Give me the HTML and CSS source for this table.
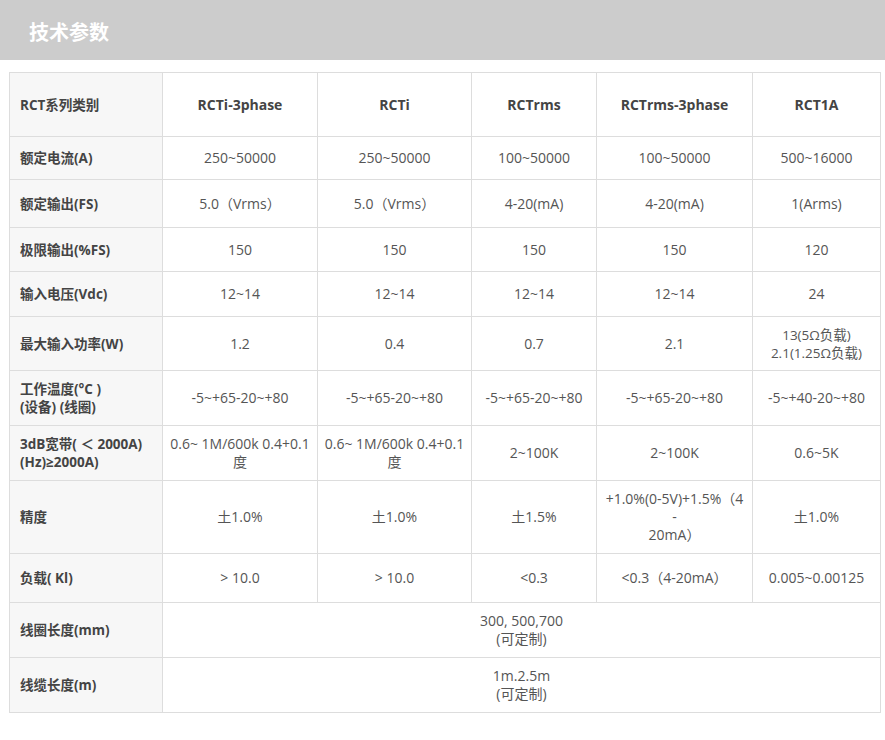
FILE: index.html
```html
<!DOCTYPE html>
<html lang="zh">
<head>
<meta charset="utf-8">
<title>技术参数</title>
<link rel="stylesheet" href="styles.css">
</head>
<body>
<header class="banner"><h1 class="banner-title">技术参数</h1></header>
<main class="wrap">
<table class="spec">
<colgroup>
<col class="c0"><col class="c1"><col class="c2"><col class="c3"><col class="c4"><col class="c5">
</colgroup>
<tbody>
<tr class="r-head"><th class="lbl">RCT系列类别</th><th>RCTi-3phase</th><th>RCTi</th><th>RCTrms</th><th>RCTrms-3phase</th><th>RCT1A</th></tr>
<tr class="r1"><th class="lbl">额定电流(A)</th><td>250~50000</td><td>250~50000</td><td>100~50000</td><td>100~50000</td><td>500~16000</td></tr>
<tr class="r2"><th class="lbl">额定输出(FS)</th><td>5.0（Vrms）</td><td>5.0（Vrms）</td><td>4-20(mA)</td><td>4-20(mA)</td><td>1(Arms)</td></tr>
<tr class="r3"><th class="lbl">极限输出(%FS)</th><td>150</td><td>150</td><td>150</td><td>150</td><td>120</td></tr>
<tr class="r4"><th class="lbl">输入电压(Vdc)</th><td>12~14</td><td>12~14</td><td>12~14</td><td>12~14</td><td>24</td></tr>
<tr class="r5"><th class="lbl">最大输入功率(W)</th><td>1.2</td><td>0.4</td><td>0.7</td><td>2.1</td><td class="tight">13(5Ω负载)<br>2.1(1.25Ω负载)</td></tr>
<tr class="r6"><th class="lbl">工作温度(°C )<br>(设备) (线圈)</th><td>-5~+65-20~+80</td><td>-5~+65-20~+80</td><td>-5~+65-20~+80</td><td>-5~+65-20~+80</td><td>-5~+40-20~+80</td></tr>
<tr class="r7"><th class="lbl">3dB宽带( ＜ 2000A)<br>(Hz)≥2000A)</th><td>0.6~ 1M/600k 0.4+0.1度</td><td>0.6~ 1M/600k 0.4+0.1度</td><td>2~100K</td><td>2~100K</td><td>0.6~5K</td></tr>
<tr class="r8"><th class="lbl">精度</th><td>土1.0%</td><td>土1.0%</td><td>土1.5%</td><td>+1.0%(0-5V)+1.5%（4<br>-<br>20mA）</td><td>土1.0%</td></tr>
<tr class="r9"><th class="lbl">负载( Kl)</th><td>&gt; 10.0</td><td>&gt; 10.0</td><td>&lt;0.3</td><td>&lt;0.3（4-20mA）</td><td>0.005~0.00125</td></tr>
<tr class="r10"><th class="lbl">线圈长度(mm)</th><td colspan="5">300, 500,700<br>(可定制)</td></tr>
<tr class="r11"><th class="lbl">线缆长度(m)</th><td colspan="5">1m.2.5m<br>(可定制)</td></tr>
</tbody>
</table>
</main>
</body>
</html>
```
FILE: styles.css
```css
html, body {
  margin: 0;
  padding: 0;
  background: #ffffff;
}
body {
  font-family: "Open Sans", "Noto Sans CJK SC", sans-serif;
  color: #555555;
}
.banner {
  height: 60px;
  background: #cccccc;
  display: flex;
  align-items: center;
  padding-left: 29px;
}
.banner-title {
  margin: 0;
  font-family: "Noto Sans CJK SC", sans-serif;
  font-size: 20px;
  font-weight: 700;
  color: #ffffff;
  line-height: 1;
  padding-top: 3px;
}
.wrap {
  padding: 12px 0 0 9px;
}
.spec {
  border-collapse: collapse;
  table-layout: fixed;
  width: 871px;
  font-size: 14px;
  line-height: 18px;
}
.c0 { width: 153px; }
.c1 { width: 155px; }
.c2 { width: 154px; }
.c3 { width: 125px; }
.c4 { width: 156px; }
.c5 { width: 128px; }
.spec th, .spec td {
  border: 1px solid #dddddd;
  padding: 0 4px;
  text-align: center;
  vertical-align: middle;
  font-weight: 400;
  color: #555555;
}
.spec .r-head th {
  font-weight: 700;
  color: #444444;
}
.spec th.lbl {
  text-align: left;
  padding-left: 10px;
  background: #f7f7f7;
  font-weight: 700;
  color: #444444;
  font-size: 13.5px;
}
.spec td.tight {
  font-size: 13.5px;
}
.r-head { height: 64px; }
.r1 { height: 43px; }
.r2 { height: 48px; }
.r3 { height: 44px; }
.r4 { height: 45px; }
.r5 { height: 54px; }
.r6 { height: 55px; }
.r7 { height: 55px; }
.r8 { height: 73px; }
.r9 { height: 49px; }
.r10 { height: 55px; }
.r11 { height: 55px; }
```
